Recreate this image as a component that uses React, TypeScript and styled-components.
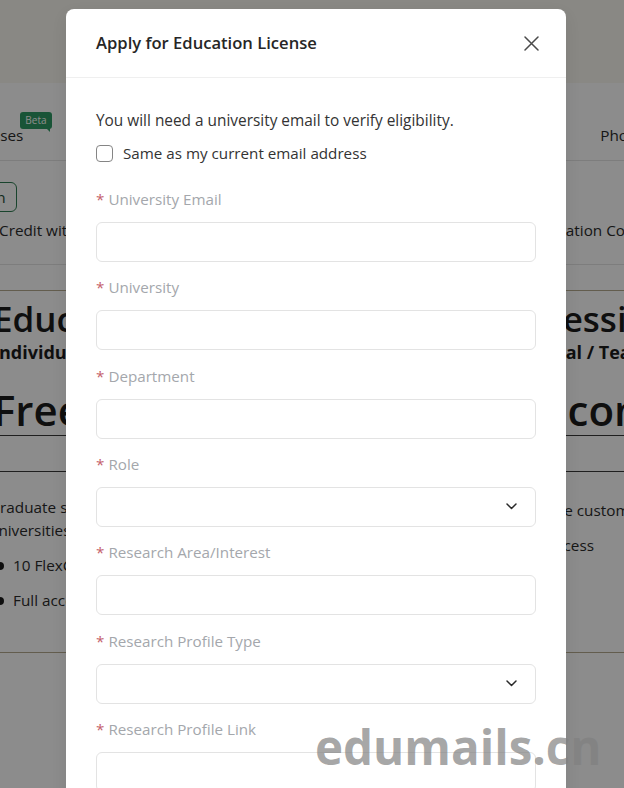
import React from "react";
import styled, { createGlobalStyle } from "styled-components";

const GlobalStyle = createGlobalStyle`
  * { box-sizing: border-box; }
  html, body { margin: 0; padding: 0; background: #ffffff; }
  body {
    width: 624px;
    height: 788px;
    overflow: hidden;
    font-family: "Open Sans", "Noto Sans", "Liberation Sans", sans-serif;
    color: #222222;
  }
`;

const Screen = styled.div`
  position: relative;
  width: 624px;
  height: 788px;
  overflow: hidden;
  background: #ffffff;
`;

/* ---------- background page ---------- */

const SiteHeader = styled.header`
  height: 83px;
  background: #faf7f1;
`;

const TabBar = styled.nav`
  display: flex;
  justify-content: space-between;
  align-items: flex-start;
  height: 78px;
  padding-top: 41px;
  margin: 0 -26px 0 -37px;
  border-bottom: 1px solid #e4e4e4;
`;

const Tab = styled.span`
  position: relative;
  font-size: 15.3px;
  line-height: 22px;
  color: #2b2b2b;
`;

const BetaBadge = styled.span`
  position: absolute;
  left: calc(100% - 3px);
  top: -12px;
  height: 17px;
  padding: 0 5px;
  border-radius: 3px;
  background: #2f9a64;
  color: #ffffff;
  font-size: 10px;
  line-height: 17px;
  &::after {
    content: "";
    position: absolute;
    right: 2px;
    bottom: -3px;
    border-left: 4px solid transparent;
    border-top: 4px solid #2f9a64;
  }
`;

const ActionSection = styled.section`
  padding: 21px 0 23px;
  border-bottom: 1px solid #e4e4e4;
`;

const OutlineButton = styled.button`
  display: block;
  height: 30px;
  margin-left: -32px;
  padding: 0 10px;
  border: 1px solid #2f7d52;
  border-radius: 6px;
  background: #ffffff;
  color: #1f4e35;
  font-family: inherit;
  font-size: 15.3px;
  line-height: 28px;
`;

const InfoRow = styled.div`
  display: flex;
  justify-content: space-between;
  margin: 7px -19px 0 -1px;
  font-size: 15.3px;
  line-height: 22px;
  color: #2b2b2b;
`;

const Cards = styled.div`
  display: flex;
  gap: 29px;
  margin: 25px 0 0 -32px;
`;

const PlanCard = styled.article`
  flex: 0 0 470px;
  border: 1px solid #b4a98f;
  border-radius: 10px;
  padding: 7px 24px 40px;
  color: #1c1c1c;
`;

const PlanName = styled.h2`
  margin: 0;
  font-size: 35px;
  font-weight: 600;
  line-height: 42px;
`;

const PlanAudience = styled.div`
  font-size: 18px;
  font-weight: 700;
  line-height: 24px;
`;

const Price = styled.div`
  margin: 21px -25px 0;
  padding: 0 25px;
  font-size: 42px;
  font-weight: 600;
  line-height: 50px;
  border-bottom: 1px solid #3a3a3a;
`;

const PriceFoot = styled.div`
  height: 36px;
  margin: 0 -25px;
  border-bottom: 1px solid #3a3a3a;
`;

const PlanDesc = styled.p<{ $shift?: number; $indent?: number }>`
  margin: ${(p) => 24 + (p.$shift ?? 0)}px 0 0 ${(p) => p.$indent ?? 0}px;
  width: 360px;
  font-size: 15.3px;
  line-height: 23px;
  color: #2b2b2b;
`;

const FeatureList = styled.ul`
  list-style: none;
  margin: 12px 0 0;
  padding: 0;
  display: flex;
  flex-direction: column;
  gap: 12px;
`;

const Feature = styled.li`
  display: flex;
  align-items: center;
  gap: 9px;
  font-size: 15.3px;
  line-height: 23px;
  color: #2b2b2b;
  white-space: nowrap;
`;

const Dot = styled.span`
  width: 8px;
  height: 8px;
  margin-left: 3px;
  border-radius: 50%;
  background: #1b1b1b;
`;

const Mask = styled.div`
  position: absolute;
  inset: 0;
  background: rgba(0, 0, 0, 0.45);
`;

/* ---------- modal ---------- */

const Modal = styled.div`
  position: absolute;
  left: 66px;
  top: 9px;
  width: 500px;
  height: 840px;
  background: #ffffff;
  border-radius: 8px;
  box-shadow: 0 6px 16px rgba(0, 0, 0, 0.08);
`;

const ModalHeader = styled.div`
  display: flex;
  align-items: center;
  justify-content: space-between;
  height: 69px;
  padding: 0 27px 0 30px;
  border-bottom: 1px solid #efefef;
`;

const ModalTitle = styled.h1`
  margin: 0;
  font-size: 16.6px;
  font-weight: 600;
  line-height: 24px;
  color: #262626;
`;

const CloseButton = styled.button`
  display: flex;
  align-items: center;
  justify-content: center;
  width: 16px;
  height: 16px;
  padding: 0;
  border: 0;
  background: transparent;
  color: #4a4a4a;
`;

const ModalBody = styled.div`
  padding: 31px 30px 0;
`;

const Intro = styled.p`
  margin: 0;
  font-size: 15.4px;
  line-height: 24px;
  color: #333333;
`;

const CheckRow = styled.label`
  display: flex;
  align-items: center;
  gap: 10px;
  height: 24px;
  margin-top: 8px;
  font-size: 15.2px;
  color: #333333;
`;

const CheckBox = styled.span`
  width: 17px;
  height: 17px;
  border: 1px solid #858585;
  border-radius: 4px;
  background: #ffffff;
`;

const Field = styled.div<{ $first?: boolean }>`
  margin-top: ${(p) => (p.$first ? "23px" : "14.33px")};
`;

const FieldLabel = styled.div`
  font-size: 15.2px;
  line-height: 22px;
  color: #a4a7ac;
`;

const Star = styled.span`
  color: #c4606b;
  margin-right: 4px;
`;

const InputBox = styled.div`
  display: flex;
  align-items: center;
  justify-content: flex-end;
  height: 40px;
  margin-top: 12px;
  padding: 0 18px 0 12px;
  border: 1px solid #e3e3e3;
  border-radius: 6px;
  background: #ffffff;
`;

const Watermark = styled.div`
  position: absolute;
  left: 315px;
  top: 722px;
  font-family: "Open Sans", "Noto Sans", sans-serif;
  font-weight: 700;
  font-size: 47.5px;
  line-height: 50px;
  color: rgba(128, 128, 128, 0.7);
  pointer-events: none;
  white-space: nowrap;
`;

const Chevron = () => (
  <svg width="11" height="7" viewBox="0 0 11 7" fill="none">
    <path d="M1 1 L5.5 5.5 L10 1" stroke="#2a2a2a" strokeWidth="1.5" strokeLinecap="round" strokeLinejoin="round" />
  </svg>
);

const CloseIcon = () => (
  <svg width="15" height="15" viewBox="0 0 15 15" fill="none">
    <path d="M1 1 L14 14 M14 1 L1 14" stroke="currentColor" strokeWidth="1.5" strokeLinecap="round" />
  </svg>
);

type FieldDef = { label: string; select?: boolean };

const fields: FieldDef[] = [
  { label: "University Email" },
  { label: "University" },
  { label: "Department" },
  { label: "Role", select: true },
  { label: "Research Area/Interest" },
  { label: "Research Profile Type", select: true },
  { label: "Research Profile Link" },
];

export default function App() {
  return (
    <Screen>
      <GlobalStyle />
      <SiteHeader />
      <TabBar>
        <Tab>
          Licenses
          <BetaBadge>Beta</BetaBadge>
        </Tab>
        <Tab>Photos</Tab>
      </TabBar>
      <ActionSection>
        <OutlineButton>Join</OutlineButton>
        <InfoRow>
          <span>Credit with your university account</span>
          <span>Redeem Activation Code</span>
        </InfoRow>
      </ActionSection>
      <Cards>
        <PlanCard>
          <PlanName>Education</PlanName>
          <PlanAudience>Individual</PlanAudience>
          <Price>Free</Price>
          <PriceFoot />
          <PlanDesc $indent={-4}>Graduate students and faculty at accredited universities</PlanDesc>
          <FeatureList>
            <Feature>
              <Dot />
              10 FlexCredits per month
            </Feature>
            <Feature>
              <Dot />
              Full access to all solvers
            </Feature>
          </FeatureList>
        </PlanCard>
        <PlanCard>
          <PlanName>Professional</PlanName>
          <PlanAudience>Individual / Team</PlanAudience>
          <Price>Welcome</Price>
          <PriceFoot />
          <PlanDesc $shift={3}>Enjoy more custom plans</PlanDesc>
          <FeatureList>
            <Feature>Priority access</Feature>
          </FeatureList>
        </PlanCard>
      </Cards>

      <Mask />

      <Modal role="dialog" aria-label="Apply for Education License">
        <ModalHeader>
          <ModalTitle>Apply for Education License</ModalTitle>
          <CloseButton aria-label="Close">
            <CloseIcon />
          </CloseButton>
        </ModalHeader>
        <ModalBody>
          <Intro>You will need a university email to verify eligibility.</Intro>
          <CheckRow>
            <CheckBox />
            Same as my current email address
          </CheckRow>
          {fields.map((f, i) => (
            <Field key={f.label} $first={i === 0}>
              <FieldLabel>
                <Star>*</Star>
                {f.label}
              </FieldLabel>
              <InputBox>{f.select ? <Chevron /> : null}</InputBox>
            </Field>
          ))}
        </ModalBody>
      </Modal>

      <Watermark>edumails.cn</Watermark>
    </Screen>
  );
}
